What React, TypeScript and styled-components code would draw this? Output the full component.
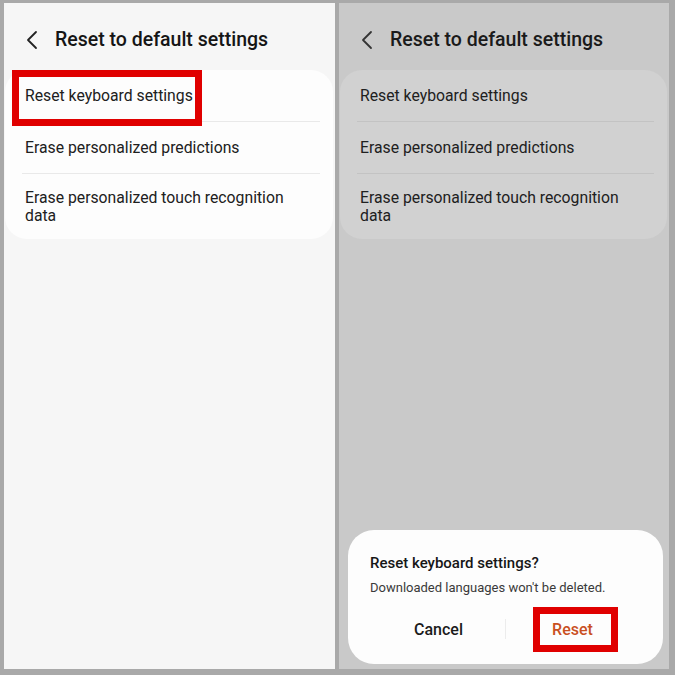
import React from "react";
import styled, { createGlobalStyle } from "styled-components";

const Global = createGlobalStyle`
  html, body { margin: 0; padding: 0; }
  body { font-family: Roboto, "Noto Sans", "Liberation Sans", sans-serif; }
`;

const Frame = styled.div`
  width: 675px;
  height: 675px;
  box-sizing: border-box;
  background: #a9a9a9;
  padding: 3px 6px 6px 4px;
  display: grid;
  grid-template-columns: 331px 330px;
  column-gap: 4px;
`;

const Screen = styled.div<{ $dim?: boolean }>`
  position: relative;
  background: ${(p) => (p.$dim ? "#c9c9c9" : "#f6f6f6")};
  display: flex;
  flex-direction: column;
  height: 666px;
  overflow: hidden;
`;

const Header = styled.div`
  height: 67px;
  box-sizing: border-box;
  padding: 6px 0 0 21px;
  display: flex;
  align-items: center;
  gap: 16px;
`;

const Title = styled.h1<{ $dim?: boolean }>`
  margin: 0;
  font-size: 19.5px;
  font-weight: 500;
  color: ${(p) => (p.$dim ? "#1a1a1a" : "#151515")};
`;

const Card = styled.div<{ $dim?: boolean }>`
  margin: 0 2px 0 1px;
  background: ${(p) => (p.$dim ? "#d1d1d1" : "#fdfdfd")};
  border-radius: 22px;
  display: flex;
  flex-direction: column;
`;

const Row = styled.div<{ $h: number }>`
  position: relative;
  height: ${(p) => p.$h}px;
  box-sizing: border-box;
  padding: 0 40px 0 20px;
  display: flex;
  align-items: center;
  font-size: 15.75px;
  line-height: 18px;
  color: #202020;
`;

const Divider = styled.div<{ $dim?: boolean }>`
  height: 1px;
  margin: 0 13px 0 17px;
  background: ${(p) => (p.$dim ? "#c3c3c3" : "#e9e9e9")};
`;

const Highlight = styled.div`
  position: absolute;
  border: 7px solid #e00000;
  box-sizing: border-box;
  pointer-events: none;
`;

const Dialog = styled.div`
  margin: auto 6px 5px 9px;
  height: 134px;
  box-sizing: border-box;
  background: #fdfdfd;
  border-radius: 26px;
  padding: 23px 0 0 0;
  display: flex;
  flex-direction: column;
`;

const DialogTitle = styled.div`
  padding-left: 22px;
  font-size: 15px;
  font-weight: 500;
  color: #161616;
  line-height: 20px;
`;

const DialogText = styled.div`
  padding-left: 22px;
  margin-top: 6px;
  font-size: 13px;
  color: #3a3a3a;
  line-height: 18px;
`;

const Buttons = styled.div`
  margin-top: 14px;
  padding: 0 24px;
  display: flex;
  align-items: center;
  height: 36px;
`;

const Button = styled.div<{ $accent?: boolean }>`
  position: relative;
  flex: 1;
  text-align: center;
  font-size: 16px;
  font-weight: 500;
  color: ${(p) => (p.$accent ? "#c9501f" : "#1b1b1b")};
`;

const VSep = styled.div`
  width: 1px;
  height: 20px;
  background: #ececec;
`;

const Back = ({ dim }: { dim?: boolean }) => (
  <svg width="14" height="20" viewBox="0 0 14 20">
    <path d="M11 2 L3 10 L11 18" fill="none" stroke={dim ? "#333" : "#222"} strokeWidth="1.8" strokeLinecap="round" strokeLinejoin="round" />
  </svg>
);

const SettingsList = ({ dim, highlight }: { dim?: boolean; highlight?: boolean }) => (
  <>
    <Header>
      <Back dim={dim} />
      <Title $dim={dim}>Reset to default settings</Title>
    </Header>
    <Card $dim={dim}>
      <Row $h={51}>
        Reset keyboard settings
        {highlight && <Highlight style={{ left: 7, top: 0, width: 190, height: 56 }} />}
      </Row>
      <Divider $dim={dim} />
      <Row $h={51}>Erase personalized predictions</Row>
      <Divider $dim={dim} />
      <Row $h={65}>Erase personalized touch recognition data</Row>
    </Card>
  </>
);

export default function App() {
  return (
    <>
      <Global />
      <Frame>
        <Screen>
          <SettingsList highlight />
        </Screen>
        <Screen $dim>
          <SettingsList dim />
          <Dialog>
            <DialogTitle>Reset keyboard settings?</DialogTitle>
            <DialogText>Downloaded languages won't be deleted.</DialogText>
            <Buttons>
              <Button>Cancel</Button>
              <VSep />
              <Button $accent>
                Reset
                <Highlight style={{ left: 27, top: -13, width: 85, height: 45 }} />
              </Button>
            </Buttons>
          </Dialog>
        </Screen>
      </Frame>
    </>
  );
}
